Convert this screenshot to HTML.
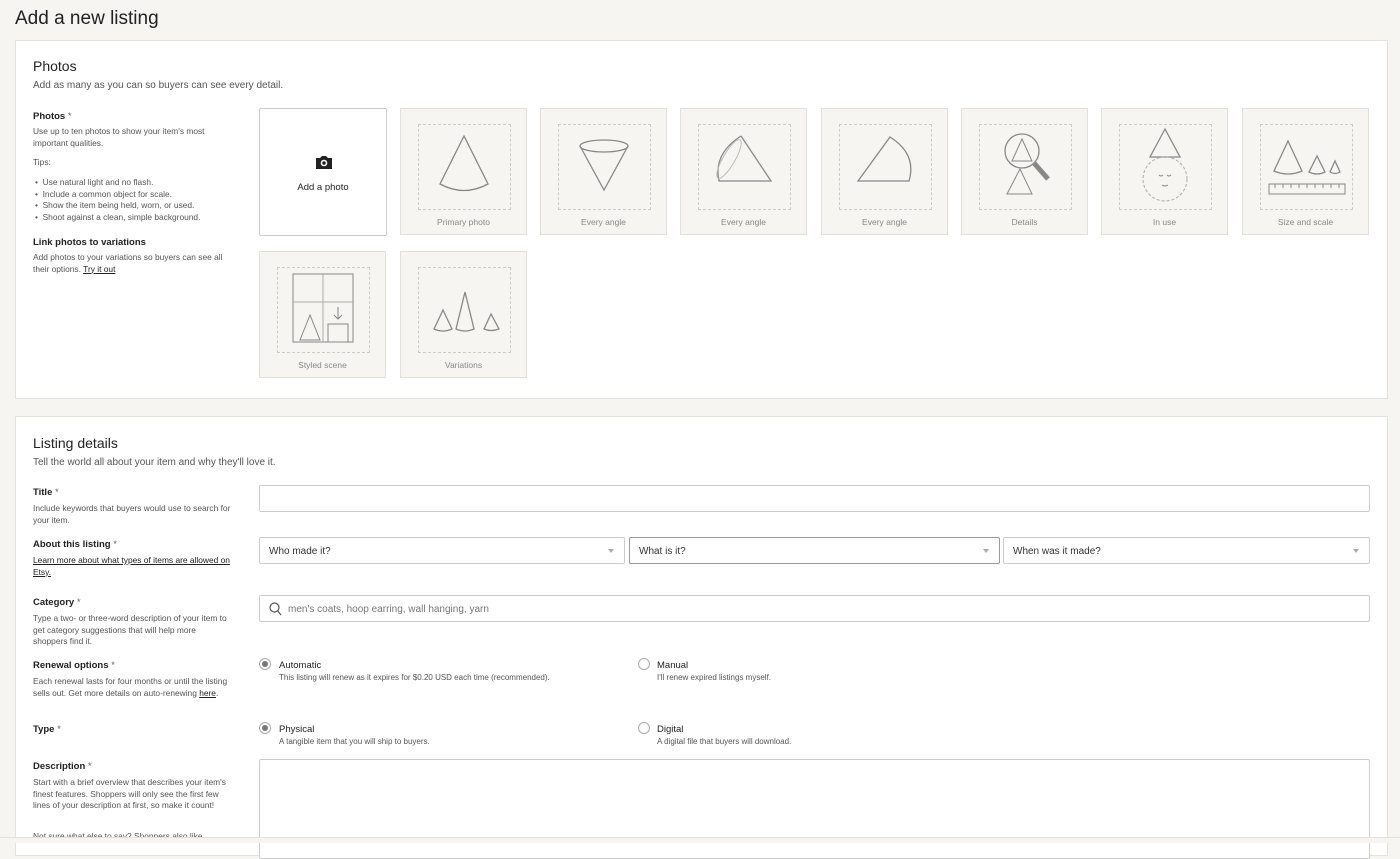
<!DOCTYPE html>
<html><head><meta charset="utf-8"><style>
*{box-sizing:border-box;margin:0;padding:0}
body{width:1400px;height:843px;overflow:hidden;background:#f6f5f2;font-family:"Liberation Sans",sans-serif;color:#222;position:relative}
.abs{position:absolute}
h1{position:absolute;left:15px;top:8px;font-size:19px;font-weight:normal;color:#222}
.card{position:absolute;left:15px;width:1373px;background:#fff;border:1px solid #e4e2dd}
.h2{position:absolute;left:17px;font-size:14px;color:#222}
.sub{position:absolute;left:17px;font-size:10px;color:#555}
.lbl{position:absolute;left:17px;font-size:9.5px;font-weight:bold;color:#222}
.lbl span{font-weight:normal;color:#666}
.help{position:absolute;left:17px;width:200px;font-size:8.4px;line-height:11.5px;color:#555}
.tile{position:absolute;width:127px;height:127px;background:#f6f5f2;border:1px solid #e2e0da}
.tile .dash{position:absolute;left:17px;top:15px;width:93px;height:86px;border:1px dashed #ccc}
.tile .cap{position:absolute;left:0;right:0;top:108px;text-align:center;font-size:8.5px;color:#888}
.tile svg{position:absolute;left:0;top:0}
.inp{position:absolute;height:27px;border:1px solid #ccc;border-radius:2px;background:#fff;font-size:10px;color:#333;padding:8px 9px}
.arr{position:absolute;right:10px;top:11px;border-left:3px solid transparent;border-right:3px solid transparent;border-top:4px solid #aaa}
.radio{position:absolute;width:12px;height:12px;border:1px solid #aaa;border-radius:50%}
.radio.on::after{content:"";position:absolute;left:2px;top:2px;width:6px;height:6px;border-radius:50%;background:#777}
.rt{position:absolute;font-size:9.5px;color:#222}
.rs{position:absolute;font-size:8px;color:#555}
</style></head><body>
<h1>Add a new listing</h1>
<div class="card" style="top:40px;height:359px">
 <div class="h2" style="top:17px">Photos</div>
 <div class="sub" style="top:39px">Add as many as you can so buyers can see every detail.</div>
 <div class="lbl" style="top:70px">Photos <span>*</span></div>
 <div class="help" style="top:85px">Use up to ten photos to show your item's most important qualities.</div>
 <div class="help" style="top:116px">Tips:</div>
 <div class="help" style="top:136px;left:19px;width:210px">• &nbsp;Use natural light and no flash.<br>• &nbsp;Include a common object for scale.<br>• &nbsp;Show the item being held, worn, or used.<br>• &nbsp;Shoot against a clean, simple background.</div>
 <div class="lbl" style="top:196px">Link photos to variations</div>
 <div class="help" style="top:211px">Add photos to your variations so buyers can see all their options. <u style="color:#222">Try it out</u></div>
</div>
<div class="abs" style="left:259px;top:108px;width:128px;height:128px;background:#fff;border:1px solid #ccc;border-radius:2px">
 <svg class="abs" style="left:55px;top:46px" width="18" height="15" viewBox="0 0 18 15"><path d="M1 3h4l2-2h4l2 2h4v11H1z" fill="#222"/><circle cx="9" cy="8" r="3.3" fill="#fff"/><circle cx="9" cy="8" r="1.8" fill="#222"/></svg>
 <div class="abs" style="left:0;right:0;top:73px;text-align:center;font-size:9.5px">Add a photo</div>
</div>
<div class="tile" style="left:400px;top:108px"><div class="dash"></div><svg width="127" height="127"><path d="M63 27L39 75Q63 88 87 75Z" fill="none" stroke="#888" stroke-width="1.3"/></svg><div class="cap">Primary photo</div></div>
<div class="tile" style="left:540px;top:108px"><div class="dash"></div><svg width="127" height="127"><ellipse cx="63" cy="37" rx="24" ry="6" fill="none" stroke="#888" stroke-width="1.3"/><path d="M39 37L63 81L87 37" fill="none" stroke="#888" stroke-width="1.3"/></svg><div class="cap">Every angle</div></div>
<div class="tile" style="left:680px;top:108px"><div class="dash"></div><svg width="127" height="127"><path d="M60 27L90 72L38 72Q32 45 60 27" fill="none" stroke="#888" stroke-width="1.3"/><ellipse cx="48" cy="50" rx="6" ry="22" transform="rotate(30 48 50)" fill="none" stroke="#bbb"/></svg><div class="cap">Every angle</div></div>
<div class="tile" style="left:821px;top:108px"><div class="dash"></div><svg width="127" height="127"><path d="M36 72L68 28Q95 45 87 72Z" fill="none" stroke="#888" stroke-width="1.3"/></svg><div class="cap">Every angle</div></div>
<div class="tile" style="left:961px;top:108px"><div class="dash"></div><svg width="127" height="127"><circle cx="60" cy="42" r="17" fill="none" stroke="#888" stroke-width="1.3"/><path d="M60 30L50 52H70Z" fill="none" stroke="#888"/><path d="M72 54L86 70" stroke="#888" stroke-width="5"/><path d="M58 60L45 85H70Z" fill="none" stroke="#888"/></svg><div class="cap">Details</div></div>
<div class="tile" style="left:1101px;top:108px"><div class="dash"></div><svg width="127" height="127"><path d="M63 20L48 48H78Z" fill="none" stroke="#888" stroke-width="1.3"/><circle cx="63" cy="70" r="22" fill="none" stroke="#aaa" stroke-dasharray="3 2"/><path d="M57 66q2 2 4 0M65 66q2 2 4 0M60 76q3 2 6 0" stroke="#888" fill="none"/></svg><div class="cap">In use</div></div>
<div class="tile" style="left:1242px;top:108px"><div class="dash"></div><svg width="127" height="127"><path d="M45 32L31 62Q45 68 59 62Z M74 47L66 63Q74 67 82 63Z M92 52L87 63Q92 66 97 63Z" fill="none" stroke="#888" stroke-width="1.3"/><rect x="26" y="75" width="76" height="10" fill="none" stroke="#888"/><path d="M32 75v4M40 75v4M48 75v4M56 75v4M64 75v4M72 75v4M80 75v4M88 75v4M96 75v4" stroke="#888"/></svg><div class="cap">Size and scale</div></div>
<div class="tile" style="left:259px;top:251px"><div class="dash"></div><svg width="127" height="127"><rect x="33" y="22" width="60" height="68" fill="none" stroke="#888"/><path d="M63 22v68M33 50h60" stroke="#aaa"/><path d="M50 63L40 88H60Z" fill="none" stroke="#888"/><rect x="68" y="72" width="20" height="18" fill="none" stroke="#888"/><path d="M78 55v12M74 63l4 4 4-4" stroke="#888" fill="none"/></svg><div class="cap">Styled scene</div></div>
<div class="tile" style="left:400px;top:251px"><div class="dash"></div><svg width="127" height="127"><path d="M42 58L33 77Q42 81 51 77Z M64 40L55 77Q64 81 73 77Z M90 62L83 77Q90 80 98 77Z" fill="none" stroke="#888" stroke-width="1.3"/></svg><div class="cap">Variations</div></div>

<div class="card" style="top:416px;height:440px">
 <div class="h2" style="top:18px">Listing details</div>
 <div class="sub" style="top:40px">Tell the world all about your item and why they'll love it.</div>
 <div class="lbl" style="top:70px">Title <span>*</span></div>
 <div class="help" style="top:86px">Include keywords that buyers would use to search for your item.</div>
 <div class="lbl" style="top:122px">About this listing <span>*</span></div>
 <div class="help" style="top:138px;color:#222;width:210px"><u>Learn more about what types of items are allowed on Etsy.</u></div>
 <div class="lbl" style="top:180px">Category <span>*</span></div>
 <div class="help" style="top:196px;width:195px">Type a two- or three-word description of your item to get category suggestions that will help more shoppers find it.</div>
 <div class="lbl" style="top:243px">Renewal options <span>*</span></div>
 <div class="help" style="top:259px;width:195px">Each renewal lasts for four months or until the listing sells out. Get more details on auto-renewing <u style="color:#222">here</u>.</div>
 <div class="lbl" style="top:307px">Type <span>*</span></div>
 <div class="lbl" style="top:344px">Description <span>*</span></div>
 <div class="help" style="top:360px;width:198px">Start with a brief overview that describes your item's finest features. Shoppers will only see the first few lines of your description at first, so make it count!</div>
 <div class="help" style="top:414px">Not sure what else to say? Shoppers also like</div>
</div>
<div class="inp" style="left:259px;top:485px;width:1111px"></div>
<div class="inp" style="left:259px;top:537px;width:366px">Who made it?<div class="arr"></div></div>
<div class="inp" style="left:629px;top:537px;width:371px;border-color:#999">What is it?<div class="arr"></div></div>
<div class="inp" style="left:1003px;top:537px;width:367px">When was it made?<div class="arr"></div></div>
<div class="inp" style="left:259px;top:595px;width:1111px;color:#777;padding-left:28px"><svg class="abs" style="left:9px;top:6px" width="13" height="14" viewBox="0 0 13 14"><circle cx="5.5" cy="5.5" r="4.5" fill="none" stroke="#555" stroke-width="1.2"/><path d="M8.8 9L12 13" stroke="#555" stroke-width="1.2"/></svg>men's coats, hoop earring, wall hanging, yarn</div>
<div class="radio on" style="left:259px;top:658px"></div>
<div class="rt" style="left:279px;top:660px">Automatic</div>
<div class="rs" style="left:279px;top:673px">This listing will renew as it expires for $0.20 USD each time (recommended).</div>
<div class="radio" style="left:638px;top:658px"></div>
<div class="rt" style="left:657px;top:660px">Manual</div>
<div class="rs" style="left:657px;top:673px">I'll renew expired listings myself.</div>
<div class="radio on" style="left:259px;top:722px"></div>
<div class="rt" style="left:279px;top:724px">Physical</div>
<div class="rs" style="left:279px;top:737px">A tangible item that you will ship to buyers.</div>
<div class="radio" style="left:638px;top:722px"></div>
<div class="rt" style="left:657px;top:724px">Digital</div>
<div class="rs" style="left:657px;top:737px">A digital file that buyers will download.</div>
<div class="inp" style="left:259px;top:759px;width:1111px;height:100px"></div>
<div class="abs" style="left:0;top:837px;width:1400px;height:6px;background:#f6f5f2;border-top:1px solid #e4e2dd"></div>
</body></html>
